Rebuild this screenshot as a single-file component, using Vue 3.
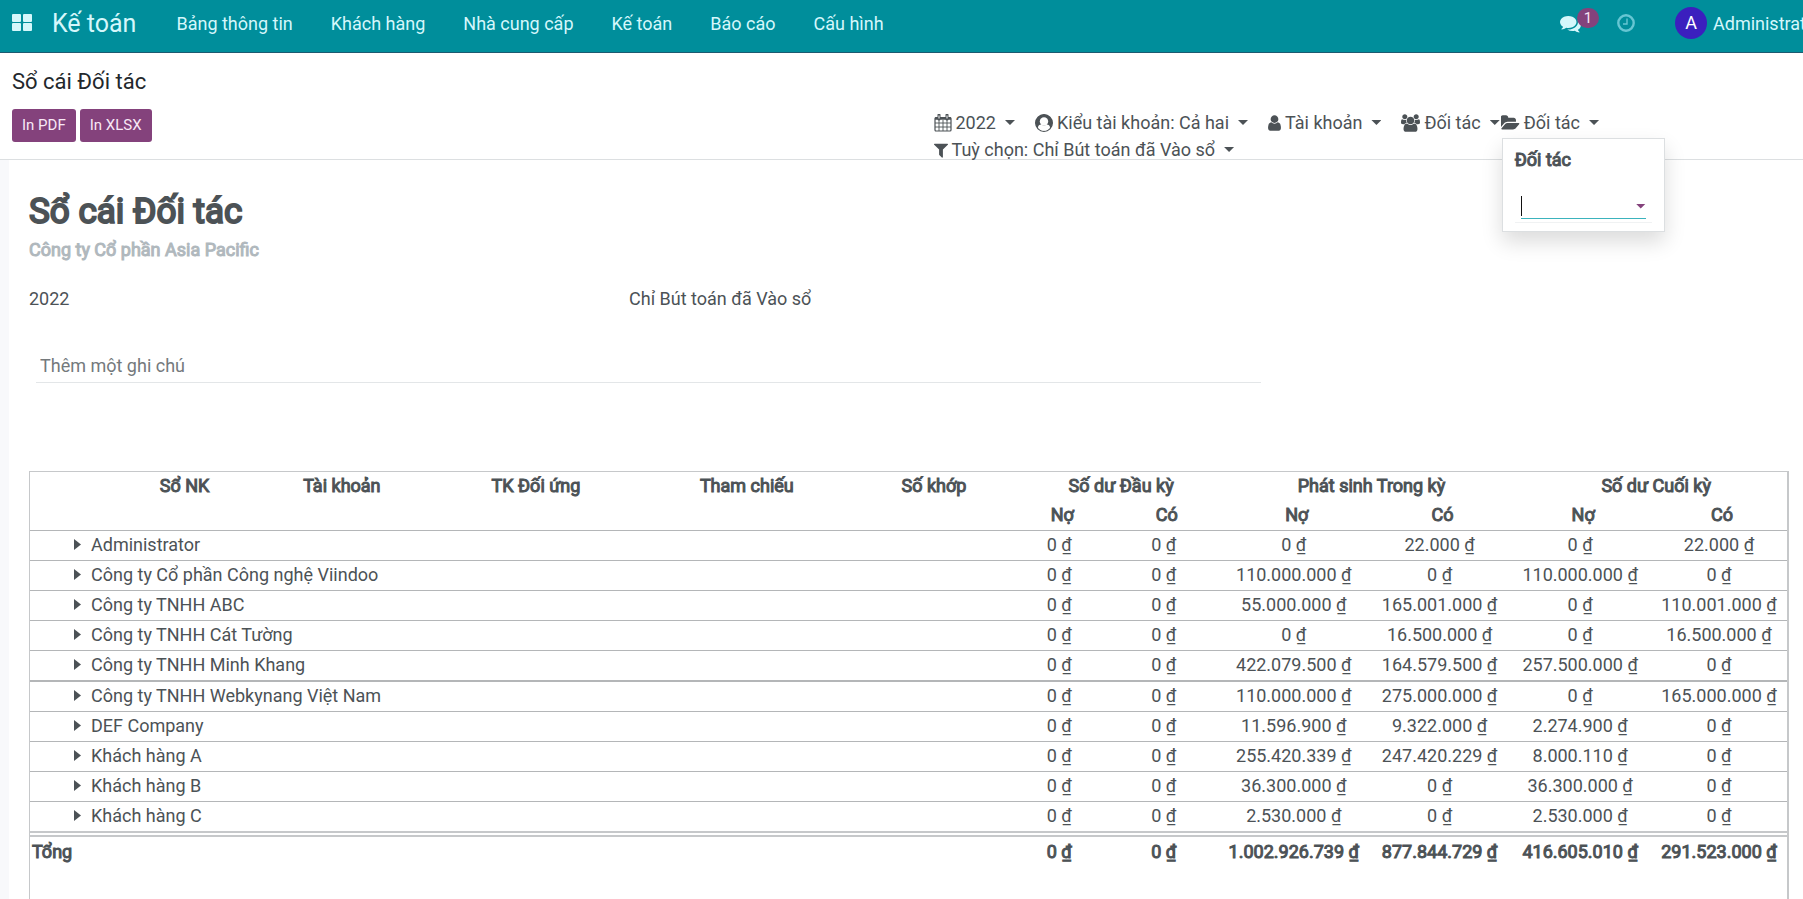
<script setup>
import { ref } from 'vue'

const menus = ['Bảng thông tin', 'Khách hàng', 'Nhà cung cấp', 'Kế toán', 'Báo cáo', 'Cấu hình']
const note = ref('')
const partner = ref('')

const columns = ['label', 'journal', 'account', 'counter', 'reference', 'match', 'open-debit', 'open-credit', 'move-debit', 'move-credit', 'close-debit', 'close-credit']
const headings = ['Sổ NK', 'Tài khoản', 'TK Đối ứng', 'Tham chiếu', 'Số khớp']
const groups = ['Số dư Đầu kỳ', 'Phát sinh Trong kỳ', 'Số dư Cuối kỳ']

const rows = [
  { name: 'Administrator', values: ['0', '0', '0', '22.000', '0', '22.000'] },
  { name: 'Công ty Cổ phần Công nghệ Viindoo', values: ['0', '0', '110.000.000', '0', '110.000.000', '0'] },
  { name: 'Công ty TNHH ABC', values: ['0', '0', '55.000.000', '165.001.000', '0', '110.001.000'] },
  { name: 'Công ty TNHH Cát Tường', values: ['0', '0', '0', '16.500.000', '0', '16.500.000'] },
  { name: 'Công ty TNHH Minh Khang', values: ['0', '0', '422.079.500', '164.579.500', '257.500.000', '0'], strong: true },
  { name: 'Công ty TNHH Webkynang Việt Nam', values: ['0', '0', '110.000.000', '275.000.000', '0', '165.000.000'] },
  { name: 'DEF Company', values: ['0', '0', '11.596.900', '9.322.000', '2.274.900', '0'] },
  { name: 'Khách hàng A', values: ['0', '0', '255.420.339', '247.420.229', '8.000.110', '0'] },
  { name: 'Khách hàng B', values: ['0', '0', '36.300.000', '0', '36.300.000', '0'] },
  { name: 'Khách hàng C', values: ['0', '0', '2.530.000', '0', '2.530.000', '0'] },
]
const totals = ['0', '0', '1.002.926.739', '877.844.729', '416.605.010', '291.523.000']
</script>

<template>
  <div class="app">
    <header class="navbar">
      <button class="apps" type="button" aria-label="Ứng dụng">
        <svg width="20" height="18" viewBox="0 0 20 18" fill="currentColor">
          <rect width="9" height="8" rx="1" /><rect x="11" width="9" height="8" rx="1" />
          <rect y="9" width="9" height="8" rx="1" /><rect x="11" y="9" width="9" height="8" rx="1" />
        </svg>
      </button>
      <a class="brand" href="#">Kế toán</a>
      <nav class="menu">
        <a v-for="item in menus" :key="item" href="#">{{ item }}</a>
      </nav>
      <div class="systray">
        <button class="chat" type="button" aria-label="Tin nhắn">
          <svg width="21" height="21" viewBox="0 0 1792 1792" fill="currentColor"><path d="M1408 768q0 139-94 257t-256.500 186.500-353.500 68.500q-86 0-176-16-124 88-278 128-36 9-86 16h-3q-11 0-20.500-8t-11.500-21q-1-3-1-6.500t.5-6.500 2-6l2.500-5 3.500-5.500 4-5 4.500-5 4-4.500q5-6 23-25t26-29.500 22.500-29 25-38.500 20.500-44q-124-72-195-177t-71-224q0-139 94-257t256.500-186.500 353.500-68.500 353.500 68.500 256.500 186.500 94 257zm384 256q0 120-71 224.500t-195 176.500q10 24 20.500 44t25 38.500 22.500 29 26 29.500 23 25q1 1 4 4.500t4.500 5 4 5 3.500 5.500l2.500 5 2 6 .5 6.500-1 6.500q-3 14-13 22t-22 7q-50-7-86-16-154-40-278-128-90 16-176 16-271 0-472-132 58 4 88 4 161 0 309-45t264-129q125-92 192-212t67-254q0-77-23-152 129 71 204 178t75 230z" /></svg>
          <span class="badge">1</span>
        </button>
        <button class="clock" type="button" aria-label="Hoạt động">
          <svg width="18" height="18" viewBox="0 0 18 18" fill="none" stroke="currentColor"><circle cx="9" cy="9" r="7.700" stroke-width="2.400" /><path d="M10 4.500V10H6" stroke-width="1.400" /></svg>
        </button>
        <a class="user" href="#"><span class="avatar">A</span><span>Administrator</span></a>
      </div>
    </header>

    <section class="control">
      <div class="control-left">
        <h1>Sổ cái Đối tác</h1>
        <div class="actions">
          <button type="button">In PDF</button>
          <button type="button">In XLSX</button>
        </div>
      </div>
      <div class="filters">
        <div class="filter-row">
          <button class="filter" type="button">
            <svg width="18" height="18" viewBox="0 0 18 18" fill="none" stroke="currentColor"><rect x="1" y="3.500" width="16" height="13.500" rx="1" stroke-width="1.200" /><path d="M1 4.500h16" stroke-width="2.500" /><path d="M1 9h16M1 13h16M5 6v11M9 6v11M13 6v11" stroke-width=".9" /><path d="M5 1v4M13 1v4" stroke-width="3" stroke-linecap="round" /><path d="M5 1.500v3M13 1.500v3" stroke="#fff" stroke-width="1" /></svg>
            <span>2022</span><i class="caret"></i>
          </button>
          <button class="filter" type="button">
            <svg width="18" height="18" viewBox="0 0 18 18"><circle cx="9" cy="9" r="8.300" fill="none" stroke="currentColor" stroke-width="1.400" /><path d="M2.700 14.200c.5-2.600 1.700-3.500 3.400-3.600 1.800 1.500 4 1.500 5.800 0 1.700.1 2.900 1 3.400 3.600A8.300 8.300 0 1 0 2.700 14.200z" fill="currentColor" /><circle cx="9" cy="7.500" r="4.200" fill="#fff" /><path d="M3.200 14c.7-2 1.600-2.800 3-2.700 1.700 1.200 3.900 1.200 5.600 0 1.400-.1 2.300.7 3 2.700-3 3.800-8.600 3.800-11.600 0z" fill="#fff" /></svg>
            <span>Kiểu tài khoản: Cả hai</span><i class="caret"></i>
          </button>
          <button class="filter" type="button">
            <svg width="13" height="18" viewBox="256 0 1280 1792" fill="currentColor"><path d="M1536 1399q0 109-62.500 187t-150.500 78h-854q-88 0-150.500-78t-62.500-187q0-85 8.500-160.500t31.500-152 58.500-131 94-89 134.500-34.500q131 128 313 128t313-128q76 0 134.500 34.500t94 89 58.500 131 31.500 152 8.500 160.500zm-256-887q0 159-112.500 271.500t-271.500 112.500-271.500-112.500-112.500-271.500 112.500-271.500 271.500-112.500 271.500 112.500 112.500 271.500z" /></svg>
            <span>Tài khoản</span><i class="caret"></i>
          </button>
          <div class="filter-pair">
            <button class="filter" type="button">
              <svg width="19" height="18" viewBox="0 0 1920 1792" fill="currentColor"><path d="M593 896q-162 5-265 128h-134q-82 0-138-40.500t-56-118.500q0-353 124-353 6 0 43.500 21t97.500 42.500 119 21.500q67 0 133-23-5 37-5 66 0 159 81 256zm1071 637q0 120-73 189.500t-194 69.500h-874q-121 0-194-69.500t-73-189.500q0-53 3.500-103.500t14-109 26.500-108.500 43-97.500 62-81 85.500-53.500 111.500-20q10 0 43 21.500t73 48 107 48 135 21.500 135-21.500 107-48 73-48 43-21.500q61 0 111.500 20t85.500 53.500 62 81 43 97.500 26.500 108.500 14 109 3.500 103.500zm-1024-1277q0 106-75 181t-181 75-181-75-75-181 75-181 181-75 181 75 75 181zm704 384q0 159-112.500 271.500t-271.500 112.500-271.500-112.500-112.500-271.500 112.500-271.500 271.500-112.500 271.500 112.500 112.500 271.500zm576 225q0 78-56 118.500t-138 40.500h-134q-103-123-265-128 81-97 81-256 0-29-5-66 66 23 133 23 59 0 119-21.500t97.500-42.500 43.500-21q124 0 124 353zm-128-609q0 106-75 181t-181 75-181-75-75-181 75-181 181-75 181 75 75 181z" /></svg>
              <span>Đối tác</span><i class="caret"></i>
            </button>
            <div class="dropdown">
              <button class="filter" type="button" aria-expanded="true">
                <svg width="19" height="18" viewBox="0 0 1856 1792" fill="currentColor"><path d="M1815 952q0 31-31 66l-336 396q-43 51-120.500 86.500t-143.500 35.500h-1088q-34 0-60.500-13t-26.500-43q0-31 31-66l336-396q43-51 120.500-86.500t143.500-35.500h1088q34 0 60.500 13t26.500 43zm-343-344v160h-832q-94 0-197 47.500t-164 119.500l-337 396-5 6q0-4-.5-12.500t-.5-12.500v-960q0-92 66-158t158-66h320q92 0 158 66t66 158v32h544q92 0 158 66t66 158z" /></svg>
                <span>Đối tác</span><i class="caret"></i>
              </button>
              <div class="panel">
                <label for="partner">Đối tác</label>
                <div class="picker">
                  <div class="picker-box">
                    <i class="cursor"></i>
                    <input id="partner" v-model="partner" type="text" autocomplete="off" />
                    <i class="caret"></i>
                  </div>
                </div>
              </div>
            </div>
          </div>
        </div>
        <div class="filter-row">
          <button class="filter" type="button">
            <svg width="14" height="18" viewBox="192 0 1408 1792" fill="currentColor"><path d="M1595 295q17 41-14 70l-493 493v742q0 42-39 59-13 5-25 5-27 0-45-19l-256-256q-19-19-19-45v-486l-493-493q-31-29-14-70 17-39 59-39h1280q42 0 59 39z" /></svg>
            <span>Tuỳ chọn: Chỉ Bút toán đã Vào sổ</span><i class="caret"></i>
          </button>
        </div>
      </div>
    </section>

    <main class="sheet">
      <h2>Sổ cái Đối tác</h2>
      <h3>Công ty Cổ phần Asia Pacific</h3>
      <div class="summary">
        <span>2022</span>
        <span>Chỉ Bút toán đã Vào sổ</span>
      </div>
      <input v-model="note" class="note" type="text" placeholder="Thêm một ghi chú" aria-label="Thêm một ghi chú" />

      <table class="ledger">
        <colgroup>
          <col v-for="c in columns" :key="c" :class="c" />
        </colgroup>
        <thead>
          <tr>
            <th></th>
            <th v-for="h in headings" :key="h">{{ h }}</th>
            <th v-for="g in groups" :key="g" class="group" colspan="2">{{ g }}</th>
          </tr>
          <tr>
            <th colspan="6"></th>
            <template v-for="g in groups" :key="g">
              <th>Nợ</th>
              <th>Có</th>
            </template>
          </tr>
        </thead>
        <tbody>
          <tr v-for="row in rows" :key="row.name" :class="{ strong: row.strong }">
            <td class="name" colspan="6">
              <button type="button"><i class="arrow"></i>{{ row.name }}</button>
            </td>
            <td v-for="(v, i) in row.values" :key="i" class="amount">{{ v }}&nbsp;₫</td>
          </tr>
        </tbody>
        <tfoot>
          <tr>
            <td class="total" colspan="6">Tổng</td>
            <td v-for="(v, i) in totals" :key="i" class="amount">{{ v }}&nbsp;₫</td>
          </tr>
        </tfoot>
      </table>
    </main>
  </div>
</template>

<style>
body {
  margin: 0;
  background: #f8f9fb;
}
</style>

<style scoped>
* {
  box-sizing: border-box;
}

.app {
  height: 100vh;
  display: flex;
  flex-direction: column;
  overflow: hidden;
  font-family: Roboto, "Noto Sans", sans-serif;
  font-size: 18px;
  line-height: 27px;
  color: #4c5256;
}

button,
input {
  font: inherit;
  color: inherit;
  margin: 0;
  padding: 0;
  border: 0;
  background: none;
}

button {
  cursor: pointer;
}

a {
  color: inherit;
  text-decoration: none;
}

svg {
  display: block;
  flex: none;
}

h1,
h2,
h3 {
  margin: 0;
  font-weight: 400;
}

/* Navigation bar */
.navbar {
  flex: none;
  display: flex;
  align-items: center;
  height: 53px;
  padding: 0 0 6px 12px;
  background: #008e9b;
  border-bottom: 1px solid #1d5a70;
  color: #d5f7fb;
  white-space: nowrap;
}

.brand {
  margin-left: 20px;
  font-size: 25px;
}

.menu {
  display: flex;
  gap: 38px;
  margin-left: 40px;
}

.systray {
  display: flex;
  align-items: center;
  margin-left: auto;
}

.chat {
  position: relative;
}

.badge {
  position: absolute;
  left: 17px;
  top: -5px;
  width: 22px;
  height: 20px;
  border-radius: 10px;
  background: #84427c;
  color: #f6e3f3;
  font-size: 15px;
  line-height: 20px;
}

.clock {
  margin-left: 36px;
  color: #66c6d3;
}

.user {
  display: flex;
  align-items: center;
  gap: 6px;
  width: 128px;
  margin-left: 40px;
  overflow: hidden;
}

.avatar {
  flex: none;
  width: 32px;
  height: 32px;
  border-radius: 50%;
  background: #3b1fbe;
  color: #fff;
  line-height: 32px;
  text-align: center;
}

/* Control panel */
.control {
  flex: none;
  display: grid;
  grid-template-columns: 1fr 1fr;
  height: 107px;
  background: #fff;
  border-bottom: 1px solid #dcdfe1;
}

.control-left {
  padding: 15px 12px 0;
}

h1 {
  font-size: 22px;
  line-height: 28px;
  color: #23282c;
}

.actions {
  display: flex;
  gap: 4px;
  margin-top: 13px;
}

.actions button {
  height: 33px;
  padding: 0 10px;
  border-radius: 3px;
  background: #84427c;
  color: #f8e8f6;
  font-size: 15px;
}

.filters {
  padding: 56px 0 0 32px;
}

.filter-row {
  display: flex;
  gap: 20px;
}

.filter-pair {
  display: flex;
  gap: 1px;
}

.filter {
  display: flex;
  align-items: center;
  gap: 4px;
  height: 27px;
  white-space: nowrap;
}

.caret {
  flex: none;
  width: 10px;
  height: 5px;
  background: currentColor;
  clip-path: polygon(0 0, 100% 0, 50% 100%);
}

.filter .caret {
  margin-left: 5px;
}

.dropdown {
  position: relative;
}

.panel {
  position: absolute;
  z-index: 2;
  top: 29px;
  left: 1px;
  width: 163px;
  padding: 7px 12px 8px;
  background: #fff;
  border: 1px solid #dcdfe1;
  box-shadow: 0 10px 20px rgba(0, 0, 0, 0.14);
}

.panel label {
  display: block;
  -webkit-text-stroke: 1px;
}

.picker {
  margin-top: 21px;
  padding: 0 6px 3px;
  border-bottom: 1px solid #f0f2f3;
}

.picker-box {
  display: flex;
  align-items: center;
  height: 25px;
  border-bottom: 1px solid #3bb3bd;
}

.picker-box input {
  flex: 1;
  min-width: 0;
  height: 24px;
  outline: 0;
}

.picker-box .caret {
  color: #84427c;
}

.cursor {
  width: 1px;
  height: 20px;
  background: #111;
}

/* Report */
.sheet {
  flex: 1;
  min-height: 0;
  margin-left: 9px;
  padding: 29px 14px 0 20px;
  overflow: hidden;
  background: #fff;
}

h2 {
  font-size: 35px;
  line-height: 46px;
  -webkit-text-stroke: 2px;
}

h3 {
  margin-top: 1px;
  font-size: 18px;
  line-height: 27px;
  color: #b0b8bd;
  -webkit-text-stroke: 1px;
}

.summary {
  display: grid;
  grid-template-columns: 600px 1fr;
  margin-top: 22px;
}

.note {
  display: block;
  width: 69.6%;
  height: 34px;
  margin: 37px 0 88px 7px;
  padding: 0 4px;
  border-bottom: 1px solid #e3e6e8;
}

.note::placeholder {
  color: #74797c;
  opacity: 1;
}

.ledger {
  width: 100%;
  table-layout: fixed;
  border-collapse: separate;
  border-spacing: 0;
  border: 1px solid #c6c8ca;
  border-right-width: 2px;
  text-align: center;
}

.label { width: 5.3%; }
.journal { width: 7%; }
.account { width: 10.9%; }
.counter { width: 11.2%; }
.reference { width: 12.8%; }
.match { width: 8.5%; }
.open-debit { width: 6.1%; }
.open-credit { width: 5.8%; }
.move-debit { width: 9%; }
.move-credit { width: 7.6%; }
.close-debit { width: 8.4%; }
.close-credit { width: 7.4%; }

th,
td {
  padding: 0;
  vertical-align: top;
  white-space: nowrap;
}

th {
  height: 29px;
  font-weight: 400;
  -webkit-text-stroke: 1px;
}

th.group {
  padding-left: 16px;
}

tbody td {
  height: 30px;
  border-top: 1px solid #b4b6b8;
}

tbody .strong td {
  height: 31px;
  border-bottom: 1px solid #b4b6b8;
}

td.amount {
  padding-right: 6px;
}

.name {
  text-align: left;
}

.name button {
  display: flex;
  align-items: center;
  gap: 10px;
  margin-left: 44px;
}

.arrow {
  width: 7px;
  height: 11px;
  background: currentColor;
  clip-path: polygon(0 0, 100% 50%, 0 100%);
}

tfoot td {
  height: 104px;
  padding-top: 1px;
  border-top: 6px double #c6c8ca;
  -webkit-text-stroke: 1px;
}

tfoot .total {
  padding-left: 2px;
  text-align: left;
}
</style>
